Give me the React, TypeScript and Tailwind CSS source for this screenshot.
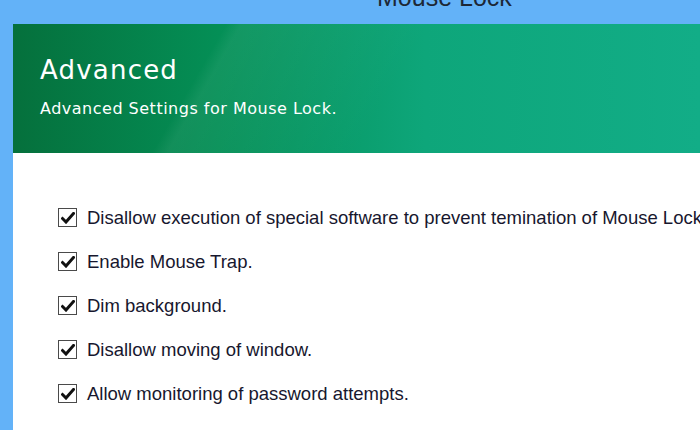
import React from "react";

const options = [
  "Disallow execution of special software to prevent temination of Mouse Lock.",
  "Enable Mouse Trap.",
  "Dim background.",
  "Disallow moving of window.",
  "Allow monitoring of password attempts.",
];

function CheckBox() {
  return (
    <span className="flex h-[19px] w-[19px] shrink-0 items-center justify-center border border-[#4a4a4a] bg-white">
      <svg width="14" height="12" viewBox="0 0 14 12">
        <path d="M1.5 6.5 L5 10 L12.5 1.5" fill="none" stroke="#111" strokeWidth="3" strokeLinecap="square" />
      </svg>
    </span>
  );
}

export default function App() {
  return (
    <div className="flex h-[430px] w-[700px] flex-col overflow-hidden bg-[#63b2f8] font-['Liberation_Sans',Arial,sans-serif]">
      <div className="relative h-[24px] shrink-0">
        <span className="absolute left-[377px] top-[-15px] text-[25px] leading-none text-[#1d2836]">Mouse Lock</span>
      </div>
      <div className="ml-[13px] flex flex-1 flex-col bg-white">
        <div className="relative h-[129px] shrink-0 overflow-hidden bg-[linear-gradient(90deg,#05703c_0%,#048f56_30%,#0ea67a_60%,#12ad87_100%)] px-[27px] pt-[31px] text-white">
          <div className="pointer-events-none absolute inset-0 bg-[linear-gradient(120deg,transparent_0%,transparent_28%,rgba(255,255,255,0.06)_30%,transparent_55%)]" />
          <div className="relative font-['DejaVu_Sans',sans-serif] text-[26px] leading-[30px] tracking-[1.2px]">Advanced</div>
          <div className="relative mt-[14px] font-['DejaVu_Sans',sans-serif] text-[16px] leading-[20px] tracking-[0.5px]">Advanced Settings for Mouse Lock.</div>
        </div>
        <div className="flex flex-col gap-[25px] pl-[45px] pt-[55px]">
          {options.map((o) => (
            <div key={o} className="flex h-[19px] items-center gap-[10px] whitespace-nowrap text-[18.5px] text-[#17172e]">
              <CheckBox />
              <span>{o}</span>
            </div>
          ))}
        </div>
      </div>
    </div>
  );
}
